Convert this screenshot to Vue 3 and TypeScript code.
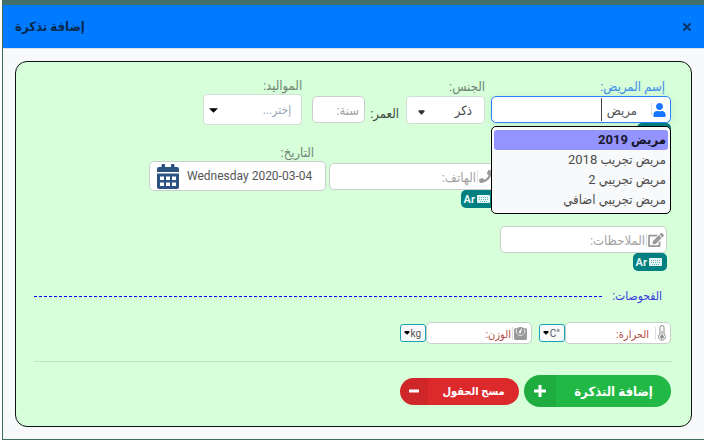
<script setup lang="ts">
import { ref } from 'vue'

const patientName = ref<string>('مريض')
const gender = ref<string>('ذكر')
const visitDate = ref<string>('Wednesday 2020-03-04')
const activeIndex = ref<number>(0)
const suggestions: string[] = ['مريض 2019', 'مريض تجريب 2018', 'مريض تجريبي 2', 'مريض تجريبي اضافي']
</script>

<template>
  <div class="page" dir="rtl">
    <section class="modal" role="dialog" aria-labelledby="title">
      <header class="head">
        <button type="button" class="close" aria-label="إغلاق">
          <svg viewBox="0 0 10 10"><path d="M1.500 1.500 8.500 8.500M8.500 1.500 1.500 8.500" /></svg>
        </button>
        <h1 id="title">إضافة تذكرة</h1>
      </header>

      <form class="card" @submit.prevent>
        <div class="row">
          <div class="field name">
            <label class="lbl active" for="name">إسم المريض:</label>
            <div class="box focus">
              <svg class="ic user" viewBox="0 0 448 512"><path d="M224 256c70.7 0 128-57.3 128-128S294.7 0 224 0 96 57.3 96 128s57.3 128 128 128zm89.600 32h-16.700c-22.200 10.200-46.900 16-72.900 16s-50.600-5.800-72.900-16h-16.700C60.200 288 0 348.200 0 422.400V464c0 26.500 21.500 48 48 48h352c26.500 0 48-21.500 48-48v-41.600c0-74.200-60.200-134.400-134.400-134.400z" /></svg>
              <span class="sep"></span>
              <input id="name" v-model="patientName" class="name-input" type="text" autocomplete="off" />
              <span class="cursor"></span>
            </div>
            <button type="button" class="kbd covered" aria-label="لوحة المفاتيح">
              <svg viewBox="0 0 13 8"><rect width="13" height="8" rx="1" /><path d="M2 2.500h9M2 4.500h9M3 6.500h7" /></svg>
            </button>
            <ul class="menu" role="listbox">
              <li v-for="(s, i) in suggestions" :key="s" role="option" :class="{ on: i === activeIndex }" @mouseenter="activeIndex = i">{{ s }}</li>
            </ul>
          </div>

          <div class="field gender">
            <label class="lbl" for="gender">الجنس:</label>
            <div class="pick">
              <select id="gender" v-model="gender">
                <option>ذكر</option>
                <option>أنثى</option>
              </select>
              <svg class="caret soft" viewBox="0 0 8 5"><path d="M1 0h6q1 .6.3 1.600L4.800 4.400q-.8.7-1.600 0L.7 1.600Q0 .6 1 0z" /></svg>
            </div>
          </div>

          <div class="age">
            <label for="age">العمر:</label>
            <div class="box"><input id="age" type="text" placeholder="سنة:" /></div>
          </div>

          <div class="field birth">
            <label class="lbl" for="birth">المواليد:</label>
            <div class="pick">
              <select id="birth"><option>إختر...</option></select>
              <svg class="caret" viewBox="0 0 10 5"><path d="M0 0h10L5 5z" /></svg>
            </div>
          </div>
        </div>

        <div class="row second">
          <div class="field phone">
            <div class="box">
              <svg class="ic" viewBox="0 0 512 512"><path d="M493.400 24.600l-104-24c-11.300-2.600-22.900 3.300-27.500 13.900l-48 112c-4.200 9.800-1.400 21.300 6.900 28l60.600 49.600c-36 76.700-98.900 140.500-177.200 177.200l-49.600-60.600c-6.800-8.300-18.200-11.100-28-6.900l-112 48C3.900 366.500-2 378.100.6 389.400l24 104C27.100 504.200 36.700 512 48 512c256.100 0 464-207.500 464-464 0-11.200-7.700-20.900-18.600-23.400z" /></svg>
              <span class="sep"></span>
              <input type="text" placeholder="الهاتف:" aria-label="الهاتف" />
            </div>
            <button type="button" class="kbd">
              <svg viewBox="0 0 13 8"><rect width="13" height="8" rx="1" /><path d="M2 2.500h9M2 4.500h9M3 6.500h7" /></svg>
              <span>Ar</span>
            </button>
          </div>
          <div class="field date">
            <label class="lbl" for="date">التاريخ:</label>
            <div class="box" dir="ltr">
              <svg class="cal" viewBox="0 0 22 25"><path d="M2 3h2.500V1q0-1 1-1h1.500q1 0 1 1v2h6V1q0-1 1-1h1.500q1 0 1 1v2H20q2 0 2 2v3H0V5q0-2 2-2z" /><path fill-rule="evenodd" d="M0 9.500h22V23q0 2-2 2H2q-2 0-2-2zM3 12.500v3.500h4v-3.500zM9 12.500v3.500h4v-3.500zM15 12.500v3.500h4v-3.500zM3 18.500V22h4v-3.500zM9 18.500V22h4v-3.500zM15 18.500V22h4v-3.500z" /></svg>
              <input id="date" v-model="visitDate" type="text" />
            </div>
          </div>
        </div>

        <div class="row notes-row">
          <div class="field notes">
            <div class="box">
              <svg class="ic edit" viewBox="0 0 576 512"><path d="M402.600 83.200l90.200 90.200c3.800 3.800 3.800 10 0 13.800L274.400 405.600l-92.800 10.300c-12.400 1.400-22.900-9.100-21.500-21.500l10.300-92.800L388.800 83.200c3.800-3.800 10-3.800 13.800 0zm162-22.900l-48.800-48.800c-15.200-15.200-39.900-15.200-55.200 0l-35.400 35.400c-3.800 3.800-3.800 10 0 13.800l90.200 90.200c3.800 3.800 10 3.800 13.800 0l35.400-35.400c15.200-15.300 15.200-40 0-55.200zM384 346.200V448H64V128h229.800c3.200 0 6.200-1.300 8.500-3.500l40-40c7.600-7.600 2.200-20.500-8.500-20.500H48C21.500 64 0 85.500 0 112v352c0 26.500 21.500 48 48 48h352c26.500 0 48-21.500 48-48V306.200c0-10.700-12.900-16-20.500-8.500l-40 40c-2.200 2.300-3.500 5.300-3.500 8.500z" /></svg>
              <span class="sep"></span>
              <input type="text" placeholder="الملاحظات:" aria-label="الملاحظات" />
            </div>
            <button type="button" class="kbd">
              <svg viewBox="0 0 13 8"><rect width="13" height="8" rx="1" /><path d="M2 2.500h9M2 4.500h9M3 6.500h7" /></svg>
              <span>Ar</span>
            </button>
          </div>
        </div>

        <h2 class="exams">الفحوصات:</h2>

        <div class="row vitals">
          <div class="vital">
            <div class="box">
              <svg class="thermo" viewBox="0 0 8 16"><path class="line" d="M2 9V2.500a2 2 0 0 1 4 0V9a3.400 3.400 0 1 1-4 0z" /><circle cx="4" cy="11.800" r="1.900" /><path class="line" d="M4 6v5" /></svg>
              <span class="sep"></span>
              <input class="spaced" type="text" placeholder="الحرارة:" aria-label="الحرارة" />
            </div>
            <div class="unit">
              <select aria-label="وحدة الحرارة"><option>°C</option></select>
              <svg class="caret" viewBox="0 0 6 4"><path d="M1 0h4q1 .6.4 1.300L3.700 3.200q-.7.6-1.400 0L.6 1.300Q0 .6 1 0z" /></svg>
            </div>
          </div>
          <div class="vital">
            <div class="box">
              <svg class="ic scale" viewBox="0 0 14 14"><path fill-rule="evenodd" d="M2 1h1.200a5 5 0 1 0 7.600 0H12q2 0 2 2v9q0 2-2 2H2q-2 0-2-2V3q0-2 2-2z" /><path fill-rule="evenodd" d="M7 0a4.300 4.300 0 1 1 0 8.600A4.300 4.300 0 0 1 7 0zm1 1.700L6 4.400a1.200 1.200 0 1 0 1.500.6l1.200-2.900z" /></svg>
              <span class="sep"></span>
              <input type="text" placeholder="الوزن:" aria-label="الوزن" />
            </div>
            <div class="unit">
              <select aria-label="وحدة الوزن"><option>kg</option></select>
              <svg class="caret" viewBox="0 0 6 4"><path d="M1 0h4q1 .6.4 1.300L3.700 3.200q-.7.6-1.400 0L.6 1.300Q0 .6 1 0z" /></svg>
            </div>
          </div>
        </div>

        <footer class="foot">
          <button type="submit" class="pill add">
            <span class="txt">إضافة التذكرة</span>
            <span class="end"><svg viewBox="0 0 12 12"><path d="M6 0v12M0 6h12" /></svg></span>
          </button>
          <button type="reset" class="pill clear">
            <span class="txt">مسح الحقول</span>
            <span class="end"><svg viewBox="0 0 12 12"><path d="M1 6h10" /></svg></span>
          </button>
        </footer>
      </form>
    </section>
  </div>
</template>

<style>
body {
  margin: 0;
  background: #fff;
}
</style>

<style scoped>
.page,
.page input,
.page select,
.page button {
  font-family: Roboto, 'DejaVu Sans Condensed', 'DejaVu Sans', sans-serif;
  font-size: 13px;
}
.page {
  box-sizing: border-box;
  padding-left: 2px;
}
.page * {
  box-sizing: border-box;
}
.modal {
  background: #f8f9fa;
  border: 1px solid #3f6f5c;
  border-right: 0;
  border-top: 5px solid #44706b;
}
.head {
  display: flex;
  align-items: center;
  justify-content: space-between;
  height: 44px;
  padding: 0 12px;
  background: #007bff;
  border-bottom: 1px solid #dee2e6;
}
h1 {
  margin: 0;
  font-size: 13px;
  line-height: 18px;
  font-weight: 700;
  color: #08294d;
}
.close {
  display: flex;
  padding: 0;
  border: 0;
  background: none;
}
.close svg {
  width: 10px;
  height: 10px;
  fill: none;
  stroke: #0a3568;
  stroke-width: 2;
}
.card {
  margin: 12px;
  padding: 16px 18px 19px;
  background: #d7ffda;
  border: 1px solid #111;
  border-radius: 12px;
}
.row {
  display: flex;
  align-items: flex-start;
  padding-right: 2px;
}
.field {
  display: flex;
  flex-direction: column;
  align-items: flex-start;
  position: relative;
}
.lbl {
  line-height: 18px;
  color: #6f8374;
}
.lbl.active {
  padding-right: 6px;
  color: #3d8bea;
}
.box {
  display: flex;
  align-items: center;
  width: 100%;
  height: 27px;
  padding: 0 4px;
  background: #fff;
  border: 1px solid #c9cfca;
  border-radius: 5px;
  position: relative;
}
.box.focus {
  border-color: #2b7fff;
  box-shadow: 0 2px 10px rgba(0, 80, 60, 0.12);
}
.box input {
  flex: 1;
  min-width: 0;
  height: 100%;
  padding: 2px 1px 0;
  border: 0;
  outline: 0;
  background: none;
  color: #555;
}
.box input::placeholder {
  color: #a3a3a3;
  opacity: 1;
}
.ic {
  flex: none;
  width: 13px;
  height: 13px;
  fill: #999;
}
.ic.user {
  height: 14px;
  fill: #1b74ff;
}
.ic.edit {
  width: 16px;
  height: 14px;
}
.sep {
  width: 1px;
  height: 13px;
  margin-right: 1px;
  background: #e0e0e0;
}
.box .name-input {
  padding-right: 14px;
}
.cursor {
  position: absolute;
  top: 1px;
  bottom: 1px;
  right: 68px;
  width: 1px;
  background: #444;
}
.name {
  width: 180px;
}
.kbd {
  display: flex;
  align-items: center;
  gap: 2px;
  height: 18px;
  padding: 0 5px 0 3px;
  border: 0;
  border-radius: 5px;
  background: #008080;
  color: #e6f5f5;
}
.kbd.covered {
  width: 34px;
}
.page .kbd {
  font-size: 11px;
  font-weight: 700;
}
.kbd svg {
  width: 13px;
  height: 8px;
}
.kbd rect {
  fill: #e6f5f5;
}
.kbd path {
  fill: none;
  stroke: #6db8b8;
  stroke-width: 1;
  stroke-dasharray: 1 1;
}
.menu {
  position: absolute;
  z-index: 2;
  top: 48px;
  right: 0;
  width: 100%;
  margin: 0;
  padding: 3px 2px;
  list-style: none;
  background: #f8f9fa;
  border: 1px solid #000;
  border-radius: 5px;
}
.menu li {
  padding: 0 2px;
  font-size: 13px;
  line-height: 20px;
  border-radius: 3px;
  color: #4d4d4d;
}
.menu li.on {
  font-weight: 700;
  color: #17172b;
  background: #9494ff;
}
.gender {
  width: 79px;
  margin-right: 6px;
}
.pick {
  position: relative;
  width: 100%;
}
.pick select {
  display: block;
  width: 100%;
  height: 28px;
  padding: 0 12px;
  appearance: none;
  background: #fff;
  border: 1px solid #cfe0d2;
  border-radius: 4px;
  color: #444;
}
.pick .caret {
  position: absolute;
  left: 6px;
  top: 14px;
  width: 9px;
  height: 5px;
  fill: #000;
  pointer-events: none;
}
.pick .caret.soft {
  left: 12px;
  width: 7px;
  fill: #333;
}
.age {
  display: flex;
  align-items: flex-end;
  gap: 5px;
  margin: 18px 7px 0 0;
  color: #3f4a41;
}
.age label {
  line-height: 18px;
}
.age .box {
  width: 53px;
}
.birth {
  width: 99px;
  margin-right: 10px;
}
.birth .lbl {
  line-height: 16px;
}
.page .birth select {
  height: 31px;
  padding: 0 10px;
  color: #9aa5b8;
  font-size: 12px;
}
.second {
  padding-top: 4px;
}
.phone {
  width: 168px;
  margin: 18px 174px 0 0;
}
.phone .kbd {
  margin-right: 2px;
}
.date {
  width: 177px;
  margin-right: 3px;
}
.date .lbl {
  padding-right: 12px;
  line-height: 16px;
}
.date .box {
  height: 30px;
  padding: 0 7px;
}
.page .date input {
  padding: 0 0 0 8px;
  font-size: 12px;
}
.cal {
  width: 22px;
  height: 25px;
  fill: #2c5282;
}
.notes-row {
  padding-top: 18px;
}
.notes {
  width: 167px;
  margin-right: 4px;
}
.notes .box {
  padding-right: 2px;
}
.exams {
  display: flex;
  align-items: center;
  gap: 10px;
  margin: 16px 0 0;
  padding-right: 11px;
  font-size: 12px;
  font-weight: 400;
  line-height: 18px;
  color: #3a3ae0;
}
.exams::after {
  content: '';
  flex: 1;
  border-top: 1px dashed #00f;
}
.vitals {
  gap: 7px;
  padding-top: 17px;
}
.vital {
  display: flex;
  align-items: center;
}
.vital .box {
  width: 106px;
  height: 22px;
}
.page .vital input {
  font-size: 11px;
}
.vital .spaced {
  padding-right: 6px;
}
.vital input::placeholder {
  color: #b34a44;
}
.thermo {
  width: 8px;
  height: 16px;
  margin-left: 1px;
  fill: #888;
}
.thermo .line {
  fill: none;
  stroke: #888;
  stroke-width: 1;
}
.unit {
  position: relative;
}
.page .unit select {
  display: block;
  width: 26px;
  height: 18px;
  padding: 0 4px 0 0;
  appearance: none;
  background: #f8f9fa;
  border: 1px solid #17a2b8;
  border-radius: 3px;
  color: #555;
  font-size: 10px;
}
.unit .caret {
  position: absolute;
  left: 4px;
  top: 7px;
  width: 6px;
  height: 4px;
  pointer-events: none;
}
.foot {
  display: flex;
  align-items: center;
  gap: 5px;
  margin-top: 17px;
  padding: 13px 2px 0 0;
  border-top: 1px solid #c1e6c4;
}
.pill {
  display: flex;
  align-items: stretch;
  padding: 0;
  border: 0;
  border-radius: 16px;
  overflow: hidden;
  color: #fff;
}
.page .pill {
  font-size: 13px;
  font-weight: 700;
}
.pill .txt {
  flex: 1;
  align-self: center;
  text-align: center;
}
.pill .end {
  display: flex;
  align-items: center;
  justify-content: center;
  background: rgba(0, 0, 0, 0.06);
}
.pill svg {
  width: 12px;
  height: 12px;
  stroke: #fff;
  stroke-width: 3;
}
.add {
  width: 147px;
  height: 32px;
  background: #22b845;
}
.add .end {
  width: 32px;
}
.page .clear {
  width: 119px;
  height: 27px;
  background: #dc2a2c;
  font-size: 11px;
}
.clear .end {
  width: 28px;
}
</style>
